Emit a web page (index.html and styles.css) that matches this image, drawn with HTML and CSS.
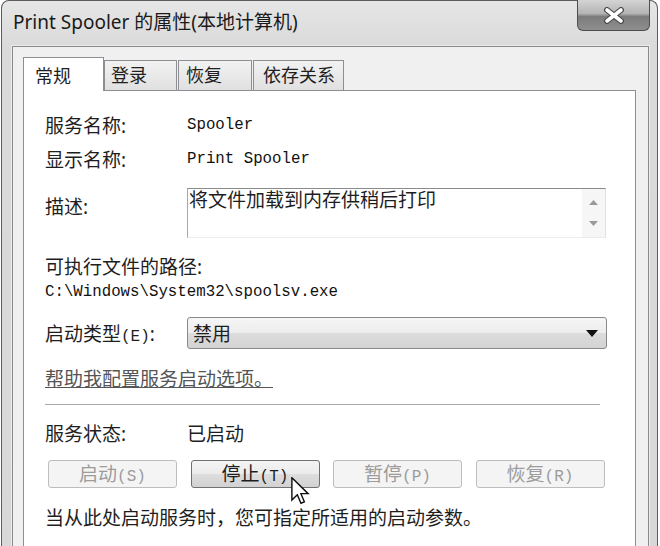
FILE: index.html
```html
<!DOCTYPE html>
<html lang="zh-CN">
<head>
  <meta charset="UTF-8" />
  <title>Print Spooler 的属性(本地计算机)</title>
  <link rel="stylesheet" href="styles.css">
</head>
<body>

  <!-- window -->
  <div class="window">
    <div class="titlebar">
      <span class="title">Print Spooler 的属性(本地计算机)</span>
      <div class="close-btn">
        <svg width="24" height="17" viewBox="0 0 24 17">
          <path d="M5 3 L19 14 M19 3 L5 14" stroke="#4a4a4a" stroke-width="6" stroke-linecap="round"/>
          <path d="M5 3 L19 14 M19 3 L5 14" stroke="#ffffff" stroke-width="3.6" stroke-linecap="round"/>
        </svg>
      </div>
    </div>

    <div class="client">
      <div class="tabs">
        <div class="tab active">常规</div>
        <div class="tab tab-login">登录</div>
        <div class="tab tab-recover">恢复</div>
        <div class="tab tab-deps">依存关系</div>
      </div>

      <div class="panel">
        <div class="row">
          <span class="label">服务名称:</span>
          <span class="mono">Spooler</span>
        </div>
        <div class="row">
          <span class="label">显示名称:</span>
          <span class="mono">Print Spooler</span>
        </div>

        <div class="row row-desc">
          <span class="label label-desc">描述:</span>
          <div class="textbox">
            <div class="textbox-text">将文件加载到内存供稍后打印</div>
            <div class="textbox-scroll">
              <svg width="9" height="6" viewBox="0 0 9 6"><polygon points="0,5 9,5 4.5,0" fill="#9a9a9a"/></svg>
              <svg width="9" height="6" viewBox="0 0 9 6"><polygon points="0,0 9,0 4.5,5" fill="#9a9a9a"/></svg>
            </div>
          </div>
        </div>

        <div class="path-label">可执行文件的路径:</div>
        <div class="path mono">C:\Windows\System32\spoolsv.exe</div>

        <div class="row row-combo">
          <span class="label">启动类型<span class="acc">(E)</span>:</span>
          <div class="combo">
            <span>禁用</span>
            <svg width="12" height="7" viewBox="0 0 12 7"><polygon points="0,0 12,0 6,7" fill="#111"/></svg>
          </div>
        </div>

        <a class="help-link" href="#">帮助我配置服务启动选项。</a>

        <div class="separator"></div>

        <div class="row row-status">
          <span class="label">服务状态:</span>
          <span>已启动</span>
        </div>

        <div class="buttons">
          <div class="btn disabled">启动<span class="acc">(S)</span></div>
          <div class="btn">停止<span class="acc">(T)</span></div>
          <div class="btn disabled">暂停<span class="acc">(P)</span></div>
          <div class="btn disabled">恢复<span class="acc">(R)</span></div>
        </div>

        <div class="note">当从此处启动服务时，您可指定所适用的启动参数。</div>

        <!-- mouse pointer over the stop button -->
        <svg class="cursor" width="19" height="28" viewBox="0 0 13 19.5">
          <path d="M0.5 0.5 L0.5 16 L4.3 12.4 L6.8 18.3 L9.2 17.3 L6.8 11.6 L11.8 11.6 Z" fill="#ffffff" stroke="#111" stroke-width="1" stroke-linejoin="miter"/>
        </svg>
      </div>
    </div>
  </div>

</body>
</html>
```

FILE: styles.css
```css
html, body {
  margin: 0;
  padding: 0;
  overflow: hidden;
  background-color: #ffffff;
}

body {
  font-family: "Noto Sans", "Noto Sans CJK SC", sans-serif;
  color: #1e1e1e;
}

.window {
  box-sizing: border-box;
  width: 657px;
  height: 546px;
  margin-left: 1px;
  padding: 0 8px 0 10px;
  border: 1px solid #5c5c5c;
  border-bottom: none;
  border-radius: 8px 8px 0 0;
  background: linear-gradient(to bottom, #e6e6e6 0, #dadada 45px, #d8d8d8 100%);
}

.titlebar {
  display: flex;
  justify-content: space-between;
  align-items: flex-start;
  height: 45px;
}

.title {
  padding: 9px 0 0 1px;
  font-size: 19px;
  line-height: 24px;
  color: #1a1a1a;
}

.close-btn {
  box-sizing: border-box;
  display: flex;
  justify-content: center;
  align-items: center;
  width: 73px;
  height: 31px;
  margin: -1px -1px 0 0;
  border: 1px solid #4e4e4e;
  border-top: none;
  border-radius: 0 0 6px 6px;
  background: linear-gradient(to bottom, #d4d4d4 0, #b4b4b4 45%, #7c7c7c 55%, #8e8e8e 100%);
}

.client {
  box-sizing: border-box;
  height: 500px;
  padding: 10px 12px 0 10px;
  border: 1px solid #8a8a8a;
  border-bottom: none;
  background-color: #f0f0f0;
  box-shadow: 0 0 0 1px #ececec;
}

/* tabs */
.tabs {
  display: flex;
  align-items: flex-end;
}

.tab {
  box-sizing: border-box;
  height: 30px;
  padding-left: 10px;
  border: 1px solid #8c8e94;
  border-bottom: none;
  background: linear-gradient(to bottom, #f2f2f2, #e0e0e0);
  font-size: 18px;
  line-height: 28px;
}

.tab.active {
  position: relative;
  z-index: 1;
  width: 81px;
  height: 34px;
  margin-bottom: -1px;
  padding-left: 11px;
  line-height: 36px;
  background: #ffffff;
}

.tab-login {
  width: 73px;
  padding-left: 6px;
}

.tab-recover {
  width: 74px;
  margin-left: 1px;
  padding-left: 7px;
}

.tab-deps {
  width: 91px;
  margin-left: 1px;
  padding-left: 9px;
}

/* panel */
.panel {
  position: relative;
  box-sizing: border-box;
  height: 456px;
  padding: 17px 0 0 21px;
  border: 1px solid #8c8e94;
  border-bottom: none;
  background-color: #ffffff;
  font-size: 19px;
}

.row {
  display: flex;
  align-items: center;
  height: 34px;
}

.label {
  width: 142px;
  flex-shrink: 0;
}

.mono {
  font-family: "Liberation Mono", monospace;
  font-size: 15.75px;
  color: #111111;
}

.acc {
  font-family: "Liberation Mono", monospace;
  font-size: 16px;
}

.row-desc {
  align-items: flex-start;
  height: 50px;
  margin-top: 12px;
}

.label-desc {
  padding-top: 7px;
  line-height: 24px;
}

.textbox {
  box-sizing: border-box;
  display: flex;
  justify-content: space-between;
  width: 419px;
  height: 50px;
  border: 1px solid;
  border-color: #8a8a8a #e2e2e2 #ececec #a8a8a8;
}

.textbox-text {
  padding-left: 1px;
  line-height: 22px;
}

.textbox-scroll {
  display: flex;
  flex-direction: column;
  justify-content: space-around;
  align-items: center;
  width: 23px;
  padding: 3px 0;
  background-color: #f6f6f6;
}

.path-label {
  margin-top: 17px;
  line-height: 24px;
}

.path {
  line-height: 26px;
}

.row-combo {
  height: 32px;
  margin-top: 12px;
}

.combo {
  box-sizing: border-box;
  display: flex;
  justify-content: space-between;
  align-items: center;
  width: 420px;
  height: 32px;
  padding: 0 8px 0 5px;
  border: 1px solid #8a8a8a;
  border-radius: 3px;
  background: linear-gradient(to bottom, #f6f6f6 0, #ececec 50%, #dcdcdc 51%, #d4d4d4 100%);
}

.help-link {
  display: inline-block;
  margin-top: 18px;
  line-height: 24px;
  color: #555555;
  text-decoration: underline;
}

.separator {
  width: 555px;
  height: 1px;
  margin-top: 12px;
  background-color: #a8a8a8;
}

.row-status {
  height: 24px;
  margin-top: 16px;
}

.buttons {
  display: flex;
  gap: 13.5px;
  margin: 15px 0 0 3px;
}

.btn {
  box-sizing: border-box;
  width: 129px;
  height: 28px;
  border: 1px solid #707070;
  border-radius: 3px;
  background: linear-gradient(to bottom, #f4f4f4 0, #ebebeb 50%, #dddddd 51%, #d2d2d2 100%);
  text-align: center;
  line-height: 26px;
}

.btn.disabled {
  border-color: #bdbdbd;
  background: #f4f4f4;
  color: #9c9c9c;
}

.note {
  margin-top: 18px;
  line-height: 24px;
}

.cursor {
  position: absolute;
  left: 267px;
  top: 386px;
}
```
